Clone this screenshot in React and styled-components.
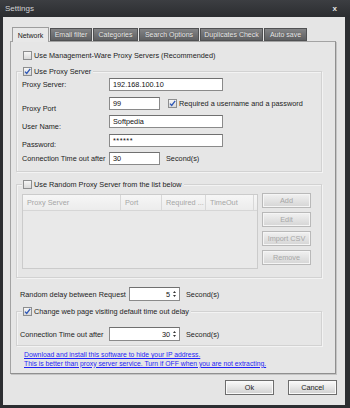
import React from "react";
import styled, { createGlobalStyle } from "styled-components";

const GlobalStyle = createGlobalStyle`
  html, body {
    margin: 0;
    padding: 0;
    background: #2c2e31;
  }
  body {
    font-family: "Liberation Sans", Arial, sans-serif;
    font-size: 7.3px;
    color: #1d1d1d;
  }
`;

const Window = styled.div`
  width: 350px;
  height: 408px;
  box-sizing: border-box;
  display: flex;
  flex-direction: column;
  background: #2c2e31;
  padding: 0 5px 3px 3px;
`;

const TitleBar = styled.div`
  height: 17px;
  margin: 0 -5px 0 -3px;
  padding: 0 13px 0 5px;
  display: flex;
  align-items: center;
  justify-content: space-between;
  background: linear-gradient(#3c3e42, #2b2d30);
  color: #d2d3d5;
  font-size: 8px;
`;

const Close = styled.span`
  font-size: 8px;
  font-weight: bold;
  color: #e4e4e4;
`;

const Client = styled.div`
  flex: 1;
  background: #e5e5e5;
  padding: 10px 0 0 7px;
  display: flex;
  flex-direction: column;
`;

const TabStrip = styled.div`
  display: flex;
  gap: 1px;
  margin-left: 2px;
  height: 14px;
  align-items: flex-end;
  position: relative;
  z-index: 1;
`;

const Tab = styled.div`
  box-sizing: border-box;
  width: ${(p) => p.$w}px;
  height: ${(p) => (p.$active ? 15 : 13)}px;
  margin-bottom: ${(p) => (p.$active ? -1 : 0)}px;
  display: flex;
  align-items: center;
  justify-content: center;
  font-size: 7px;
  white-space: nowrap;
  border: 1px solid ${(p) => (p.$active ? "#9d9d9d" : "#505153")};
  border-bottom: ${(p) => (p.$active ? "none" : "1px solid #505153")};
  background: ${(p) =>
    p.$active ? "#e8e8e8" : "linear-gradient(#838486, #5f6062)"};
  color: ${(p) => (p.$active ? "#202020" : "#ececec")};
  text-shadow: ${(p) => (p.$active ? "none" : "0 0 1px #444")};
`;

const Panel = styled.div`
  box-sizing: border-box;
  width: 326px;
  height: 333px;
  border: 1px solid #a3a3a3;
  border-right-color: #8f8f8f;
  border-bottom-color: #8f8f8f;
  box-shadow: 1px 1px 0 #c4c4c4;
  background: #e6e6e6;
  padding: 0 0 0 5px;
  display: flex;
  flex-direction: column;
`;

const CheckRow = styled.div`
  display: flex;
  align-items: center;
  gap: 2px;
  height: 10px;
  margin-top: ${(p) => p.$top || 0}px;
  margin-left: ${(p) => p.$left || 0}px;
  white-space: nowrap;
`;

const Box = styled.span`
  box-sizing: border-box;
  width: 9px;
  height: 9px;
  border: 1px solid #8d8e8f;
  background: linear-gradient(#f6f6f6, #d9d9d9);
  display: inline-flex;
  align-items: center;
  justify-content: center;
`;

const Check = ({ checked }) => (
  <Box>
    {checked && (
      <svg width="7" height="7" viewBox="0 0 7 7">
        <path d="M1 3.6 L2.7 5.5 L6.2 0.8" stroke="#2d56b6" strokeWidth="1.3" fill="none" />
      </svg>
    )}
  </Box>
);

const Group = styled.div`
  box-sizing: border-box;
  width: ${(p) => p.$w || 306}px;
  margin-top: ${(p) => p.$top}px;
  border: 1px solid #d2d2d2;
  box-shadow: inset 1px 1px 0 #f3f3f3, 1px 1px 0 #f3f3f3;
  padding: 0 0 ${(p) => p.$bottom}px ${(p) => p.$left}px;
  display: flex;
  flex-direction: column;
`;

const Legend = styled.div`
  align-self: flex-start;
  margin: -6px 0 0 ${(p) => 5 - p.$left}px;
  padding: 0 2px 0 1px;
  background: #e6e6e6;
`;

const FormGrid = styled.div`
  display: grid;
  grid-template-columns: ${(p) => p.$label}px auto;
  row-gap: 5.5px;
  margin-top: ${(p) => p.$top}px;
`;

const Label = styled.div`
  align-self: center;
  white-space: nowrap;
  position: relative;
  top: ${(p) => p.$drop || 0}px;
  width: ${(p) => (p.$w ? `${p.$w}px` : "auto")};
`;

const Line = styled.div`
  display: flex;
  align-items: center;
  gap: ${(p) => p.$gap || 6}px;
  white-space: nowrap;
  margin-top: ${(p) => p.$top || 0}px;
  margin-left: ${(p) => p.$left || 0}px;
`;

const Field = styled.div`
  box-sizing: border-box;
  width: ${(p) => p.$w}px;
  height: ${(p) => p.$h || 13}px;
  border: 1px solid #8a8a8a;
  border-top-color: #707070;
  background: #fff;
  padding: 0 3px;
  display: flex;
  align-items: center;
  justify-content: ${(p) => (p.$right ? "flex-end" : "flex-start")};
  font-size: 7.3px;
  color: #111;
  letter-spacing: ${(p) => (p.$mask ? "0.5px" : "0")};
`;

const Arrows = styled.span`
  display: flex;
  flex-direction: column;
  gap: 2px;
  margin-left: 3px;
`;

const Spinner = ({ value, w }) => (
  <Field $w={w} $h={14} $right>
    {value}
    <Arrows>
      <svg width="3" height="2" viewBox="0 0 3 2">
        <path d="M0 2 L1.5 0 L3 2Z" fill="#333" />
      </svg>
      <svg width="3" height="2" viewBox="0 0 3 2">
        <path d="M0 0 L1.5 2 L3 0Z" fill="#333" />
      </svg>
    </Arrows>
  </Field>
);

const ListRow = styled.div`
  display: flex;
  gap: 4px;
  margin-top: 5px;
`;

const ListView = styled.div`
  box-sizing: border-box;
  width: 236px;
  height: 75px;
  border: 1px solid #cbcbcb;
  background: #e9e9e9;
`;

const ListHeader = styled.div`
  display: flex;
  height: 15px;
  background: linear-gradient(#f6f6f6, #ececec);
  border-bottom: 1px solid #d6d6d6;
`;

const HeadCell = styled.div`
  box-sizing: border-box;
  width: ${(p) => p.$w}px;
  border-right: 1px solid #d8d8d8;
  padding-left: 4px;
  display: flex;
  align-items: center;
  color: #a6a6a6;
  white-space: nowrap;
  overflow: hidden;
`;

const SideButtons = styled.div`
  display: flex;
  flex-direction: column;
  gap: 4px;
  margin-top: -1px;
`;

const Button = styled.div`
  box-sizing: border-box;
  width: ${(p) => p.$w || 49}px;
  height: 15px;
  display: flex;
  align-items: center;
  justify-content: center;
  border: 1px solid ${(p) => (p.$disabled ? "#b9b9b9" : "#6d6d6d")};
  background: ${(p) =>
    p.$disabled
      ? "linear-gradient(#f1f1f1, #d5d5d5)"
      : "linear-gradient(#fbfbfb, #e6e6e6 50%, #cfcfcf)"};
  box-shadow: inset 0 0 0 1px ${(p) => (p.$disabled ? "#f5f5f5" : "#fafafa")};
  color: ${(p) => (p.$disabled ? "#a7a7a7" : "#1e1e1e")};
  font-size: 7.3px;
`;

const Links = styled.div`
  margin: 5px 0 0 8px;
  display: flex;
  flex-direction: column;
`;

const Link = styled.a`
  color: #1f1ff5;
  text-decoration: underline;
  font-size: 6.8px;
  line-height: 8.5px;
  white-space: nowrap;
`;

const Footer = styled.div`
  display: flex;
  justify-content: flex-end;
  gap: 14px;
  margin-top: 6px;
  padding-right: 8px;
`;

export default function App() {
  return (
    <>
      <GlobalStyle />
      <Window>
        <TitleBar>
          <span>Settings</span>
          <Close>x</Close>
        </TitleBar>
        <Client>
          <TabStrip>
            <Tab $w={37} $active>Network</Tab>
            <Tab $w={42}>Email filter</Tab>
            <Tab $w={45}>Categories</Tab>
            <Tab $w={60}>Search Options</Tab>
            <Tab $w={63}>Duplicates Check</Tab>
            <Tab $w={43}>Auto save</Tab>
          </TabStrip>
          <Panel>
            <CheckRow $top={8} $left={7}>
              <Check />
              Use Management-Ware Proxy Servers (Recommended)
            </CheckRow>

            <Group $top={11} $left={5} $bottom={6}>
              <Legend $left={5}>
                <CheckRow>
                  <Check checked />
                  Use Proxy Server
                </CheckRow>
              </Legend>
              <FormGrid $label={87} $top={2}>
                <Label>Proxy Server:</Label>
                <Field $w={114}>192.168.100.10</Field>
                <Label $drop={5}>Proxy Port</Label>
                <Line $gap={8}>
                  <Field $w={51}>99</Field>
                  <CheckRow>
                    <Check checked />
                    Required a username and a password
                  </CheckRow>
                </Line>
                <Label $drop={5}>User Name:</Label>
                <Field $w={114}>Softpedia</Field>
                <Label $drop={4}>Password:</Label>
                <Field $w={114} $mask>******</Field>
                <Label>Connection Time out after</Label>
                <Line>
                  <Field $w={51}>30</Field>
                  Second(s)
                </Line>
              </FormGrid>
            </Group>

            <Group $top={12} $left={5} $bottom={8}>
              <Legend $left={5}>
                <CheckRow>
                  <Check />
                  Use Random Proxy Server from the list below
                </CheckRow>
              </Legend>
              <ListRow>
                <ListView>
                  <ListHeader>
                    <HeadCell $w={98}>Proxy Server</HeadCell>
                    <HeadCell $w={41}>Port</HeadCell>
                    <HeadCell $w={44}>Required ...</HeadCell>
                    <HeadCell $w={48}>TimeOut</HeadCell>
                  </ListHeader>
                </ListView>
                <SideButtons>
                  <Button $disabled>Add</Button>
                  <Button $disabled>Edit</Button>
                  <Button $disabled>Import CSV</Button>
                  <Button $disabled>Remove</Button>
                </SideButtons>
              </ListRow>
            </Group>

            <Line $top={9} $left={4}>
              <Label $w={103}>Random delay between Request</Label>
              <Spinner value="5" w={51} />
              Second(s)
            </Line>

            <Group $top={10} $left={3} $bottom={4}>
              <Legend $left={3}>
                <CheckRow>
                  <Check checked />
                  Change web page visiting default time out delay
                </CheckRow>
              </Legend>
              <FormGrid $label={89} $top={11}>
                <Label>Connection Time out after</Label>
                <Line>
                  <Spinner value="30" w={71} />
                  Second(s)
                </Line>
              </FormGrid>
            </Group>

            <Links>
              <Link href="#">Download and install this software to hide your IP address.</Link>
              <Link href="#">This is better than proxy server service. Turn if OFF when you are not extracting.</Link>
            </Links>
          </Panel>
          <Footer>
            <Button>Ok</Button>
            <Button>Cancel</Button>
          </Footer>
        </Client>
      </Window>
    </>
  );
}
